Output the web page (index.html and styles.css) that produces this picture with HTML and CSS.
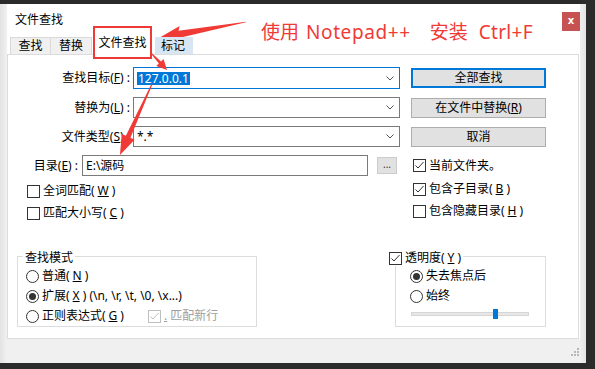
FILE: index.html
```html
<!DOCTYPE html>
<html lang="zh-CN">
<head>
<meta charset="utf-8">
<title>文件查找</title>
<link rel="stylesheet" href="styles.css">
</head>
<body>
<div class="screen">
  <div class="shadow">
    <div class="dialog">
      <div class="titlebar">
        <span class="title">文件查找</span>
        <span class="close">x</span>
      </div>
      <div class="tabs">
        <span class="tab t1">查找</span>
        <span class="tab t2">替换</span>
        <span class="tab active">文件查找</span>
        <span class="tab hover">标记</span>
      </div>
      <div class="panel">
        <div class="rows">
          <div class="row r1">
            <span class="lbl">查找目标(<u>F</u>)&nbsp;:</span>
            <div class="combo focus"><span class="sel">127.0.0.1</span><svg class="chev" width="8" height="5" viewBox="0 0 8 5"><path d="M0.5 0.5 L4 4 L7.5 0.5" fill="none" stroke="#555" stroke-width="1"/></svg></div>
            <span class="btn default">全部查找</span>
          </div>
          <div class="row">
            <span class="lbl">替换为(<u>L</u>)&nbsp;:</span>
            <div class="combo"><span class="val"></span><svg class="chev" width="8" height="5" viewBox="0 0 8 5"><path d="M0.5 0.5 L4 4 L7.5 0.5" fill="none" stroke="#555" stroke-width="1"/></svg></div>
            <span class="btn">在文件中替换(<u>R</u>)</span>
          </div>
          <div class="row">
            <span class="lbl">文件类型(<u>S</u>)&nbsp;:</span>
            <div class="combo"><span class="val">*.*</span><svg class="chev" width="8" height="5" viewBox="0 0 8 5"><path d="M0.5 0.5 L4 4 L7.5 0.5" fill="none" stroke="#555" stroke-width="1"/></svg></div>
            <span class="btn">取消</span>
          </div>
          <div class="row r4">
            <span class="lbl short">目录(<u>E</u>)&nbsp;:</span>
            <div class="combo dir"><span class="val">E:\源码</span></div>
            <span class="browse">...</span>
            <span class="chk cur"><svg width="13" height="13" viewBox="0 0 13 13"><rect x="0.5" y="0.5" width="12" height="12" fill="#fff" stroke="#333"/><path d="M2.5 6.5 L5 9 L10.5 3" fill="none" stroke="#333"/></svg>当前文件夹。</span>
          </div>
        </div>
        <div class="opts">
          <div class="col left">
            <span class="chk"><svg width="13" height="13" viewBox="0 0 13 13"><rect x="0.5" y="0.5" width="12" height="12" fill="#fff" stroke="#333"/></svg>全词匹配(<u>W</u>)</span>
            <span class="chk"><svg width="13" height="13" viewBox="0 0 13 13"><rect x="0.5" y="0.5" width="12" height="12" fill="#fff" stroke="#333"/></svg>匹配大小写(<u>C</u>)</span>
          </div>
          <div class="col right">
            <span class="chk"><svg width="13" height="13" viewBox="0 0 13 13"><rect x="0.5" y="0.5" width="12" height="12" fill="#fff" stroke="#333"/><path d="M2.5 6.5 L5 9 L10.5 3" fill="none" stroke="#333"/></svg>包含子目录(<u>B</u>)</span>
            <span class="chk"><svg width="13" height="13" viewBox="0 0 13 13"><rect x="0.5" y="0.5" width="12" height="12" fill="#fff" stroke="#333"/></svg>包含隐藏目录(<u>H</u>)</span>
          </div>
        </div>
        <div class="groups">
          <div class="group mode">
            <span class="legend">查找模式</span>
            <span class="radio"><svg width="13" height="13" viewBox="0 0 13 13"><circle cx="6.5" cy="6.5" r="6" fill="#fff" stroke="#333"/></svg>普通(<u>N</u>)</span>
            <span class="radio"><svg width="13" height="13" viewBox="0 0 13 13"><circle cx="6.5" cy="6.5" r="6" fill="#fff" stroke="#333"/><circle cx="6.5" cy="6.5" r="3.5" fill="#333"/></svg>扩展(<u>X</u>) (\n, \r, \t, \0, \x...)</span>
            <div class="line">
              <span class="radio wide"><svg width="13" height="13" viewBox="0 0 13 13"><circle cx="6.5" cy="6.5" r="6" fill="#fff" stroke="#333"/></svg>正则表达式(<u>G</u>)</span>
              <span class="chk disabled"><svg width="13" height="13" viewBox="0 0 13 13"><rect x="0.5" y="0.5" width="12" height="12" fill="#fff" stroke="#bfbfbf"/><path d="M2.5 6.5 L5 9 L10.5 3" fill="none" stroke="#bfbfbf"/></svg><u>.</u> 匹配新行</span>
            </div>
          </div>
          <div class="group trans">
            <span class="chk legend"><svg width="13" height="13" viewBox="0 0 13 13"><rect x="0.5" y="0.5" width="12" height="12" fill="#fff" stroke="#333"/><path d="M2.5 6.5 L5 9 L10.5 3" fill="none" stroke="#333"/></svg>透明度(<u>Y</u>)</span>
            <span class="radio"><svg width="13" height="13" viewBox="0 0 13 13"><circle cx="6.5" cy="6.5" r="6" fill="#fff" stroke="#333"/><circle cx="6.5" cy="6.5" r="3.5" fill="#333"/></svg>失去焦点后</span>
            <span class="radio"><svg width="13" height="13" viewBox="0 0 13 13"><circle cx="6.5" cy="6.5" r="6" fill="#fff" stroke="#333"/></svg>始终</span>
            <div class="slider"><span class="thumb"></span></div>
          </div>
        </div>
      </div>
      <div class="status">
        <svg class="grip" width="10" height="10" viewBox="0 0 10 10">
          <rect x="7" y="0" width="2" height="2" fill="#b8b8b8"/>
          <rect x="4" y="3" width="2" height="2" fill="#b8b8b8"/>
          <rect x="7" y="3" width="2" height="2" fill="#b8b8b8"/>
          <rect x="1" y="6" width="2" height="2" fill="#b8b8b8"/>
          <rect x="4" y="6" width="2" height="2" fill="#b8b8b8"/>
          <rect x="7" y="6" width="2" height="2" fill="#b8b8b8"/>
        </svg>
      </div>
    </div>
  </div>

  <div class="note"><span class="n1">使用</span><span class="n2">Notepad++</span><span class="n3">安装</span><span class="n4">Ctrl+F</span></div>

  <svg class="arrows" width="595" height="369" viewBox="0 0 595 369">
    <g fill="#f03a36">
      <polygon transform="translate(246 22) rotate(169.6)" points="0,-0.3 68,-3.5 66,-8 88.5,0 66,8 68,3.5 0,0.3"/>
      <polygon transform="translate(151 53) rotate(46.7)" points="0,-0.5 13,-1.5 13,-5 23.3,0 13,5 13,1.5 0,0.5"/>
      <polygon transform="translate(152 84) rotate(114.3)" points="0,-0.5 57.9,-2.5 57.9,-7 77.9,0 57.9,7 57.9,2.5 0,0.5"/>
    </g>
  </svg>
</div>
</body>
</html>
```
FILE: styles.css
```css
* { box-sizing: border-box; }
html, body { margin: 0; padding: 0; }
body {
  background: #2b2b2b;
  width: 595px;
  height: 369px;
  overflow: hidden;
  font-family: "Noto Sans", "Noto Sans CJK SC", "Microsoft YaHei", sans-serif;
  font-size: 12px;
  line-height: 16px;
  color: #000;
  text-autospace: no-autospace;
}
u { text-decoration: underline; text-underline-offset: 1px; text-autospace: no-autospace; }
.screen { position: relative; height: 369px; padding-top: 4px; }
.shadow {
  width: 586px;
  height: 359px;
  padding: 0 6px 0 7px;
  background: linear-gradient(to right, #e2e2e2, #f1f1f1 7px, #f1f1f1 579px, #e4e4e4);
}
.dialog {
  width: 573px;
  height: 359px;
  background: #fff;
  display: flex;
  flex-direction: column;
}
.titlebar {
  height: 25px;
  display: flex;
  align-items: flex-start;
  justify-content: space-between;
  padding-left: 8px;
}
.title { margin-top: 8px; }
.close {
  margin-top: 8px;
  margin-bottom: -2px;
  width: 18px;
  height: 19px;
  background: #c65352;
  color: #fff;
  font: bold 10px/17px "DejaVu Sans", sans-serif;
  text-align: center;
}
.tabs {
  height: 25px;
  display: flex;
  align-items: flex-end;
  padding-left: 3px;
  position: relative;
  z-index: 1;
}
.tab {
  height: 17px;
  line-height: 16px;
  text-align: center;
  background: #f0f0f0;
  border: 1px solid #d9d9d9;
  border-bottom: none;
}
.t1 { width: 41px; }
.t2 { width: 41px; border-left: none; }
.tab.active {
  width: 59px;
  height: 33px;
  margin-left: 1px;
  margin-bottom: -5px;
  background: #fff;
  border: 2px solid #ee3a36;
  padding-top: 7px;
}
.tab.hover {
  width: 38px;
  margin-left: 3px;
  background: #d8e6f3;
  border-color: #d8e6f3;
  text-align: left;
  padding-left: 5px;
}
.panel {
  width: 572px;
  height: 285px;
  border: 1px solid #dcdcdc;
  padding-top: 12px;
}
.rows { display: flex; flex-direction: column; gap: 8px; }
.row { display: flex; align-items: center; height: 21px; }
.row.r1 { height: 22px; }
.lbl { flex: 0 0 122px; text-align: right; }
.lbl.short { flex-basis: 70px; }
.combo {
  margin-left: 3px;
  width: 267px;
  height: 100%;
  border: 1px solid #7a7a7a;
  display: flex;
  align-items: center;
  justify-content: space-between;
  padding: 0 5px 0 3px;
}
.combo.focus { border-color: #0078d7; }
.combo.dir { margin-left: 4px; width: 286px; }
.sel {
  background: #0078d7;
  color: #fff;
  line-height: 13px;
  padding: 0 1px;
}
.chev { flex: none; }
.btn {
  margin-left: 11px;
  width: 135px;
  height: 20px;
  border: 1px solid #adadad;
  background: #e1e1e1;
  text-align: center;
  line-height: 18px;
}
.btn.default { border: 2px solid #0078d7; line-height: 16px; }
.browse {
  margin-left: 9px;
  width: 20px;
  height: 17px;
  border: 1px solid #cccccc;
  background: #e1e1e1;
  font-size: 10px;
  line-height: 13px;
  text-align: center;
  color: #333;
}
.chk, .radio {
  display: flex;
  align-items: center;
  gap: 3px;
  height: 20px;
  white-space: nowrap;
}
.chk svg, .radio svg { flex: none; }
.chk.cur { margin-left: 16px; }
.opts {
  margin-top: 3px;
  display: grid;
  grid-template-columns: 405px auto;
}
.col { display: flex; flex-direction: column; gap: 2px; }
.col.left { padding-left: 19px; padding-top: 2px; }
.groups { display: flex; margin-top: 33px; }
.group {
  height: 71px;
  border: 1px solid #dcdcdc;
  display: flex;
  flex-direction: column;
  align-items: flex-start;
}
.group.mode { margin-left: 9px; width: 240px; padding-left: 8px; }
.group.trans { margin-left: 138px; width: 151px; padding-left: 14px; }
.legend {
  height: 16px;
  margin-top: -7px;
  background: #fff;
  padding: 0 2px;
}
.group.mode .legend { margin-left: -3px; }
.group.trans .legend { margin-left: -21px; padding: 0 2px 0 0; }
.line { display: flex; align-items: center; }
.radio.wide { width: 122px; }
.chk.disabled { color: #9e9e9e; }
.slider {
  position: relative;
  margin-top: 6px;
  margin-left: 1px;
  width: 118px;
  height: 4px;
  background: #e7e7e7;
  border: 1px solid #d6d6d6;
}
.thumb {
  position: absolute;
  left: 81px;
  top: -4px;
  width: 5px;
  height: 10px;
  background: #0078d7;
}
.status {
  flex: 1;
  background: #f0f0f0;
  display: flex;
  justify-content: flex-end;
  align-items: flex-end;
  padding: 0 0 5px 0;
}
.note {
  position: absolute;
  left: 261px;
  top: 20px;
  color: #f03a36;
  font-size: 19px;
  line-height: 24px;
  display: flex;
  white-space: nowrap;
}
.n2 { margin-left: 7px; letter-spacing: 0.6px; }
.n3 { margin-left: 19px; }
.n4 { margin-left: 11px; letter-spacing: 0.3px; }
.arrows { position: absolute; left: 0; top: 0; pointer-events: none; }
```
